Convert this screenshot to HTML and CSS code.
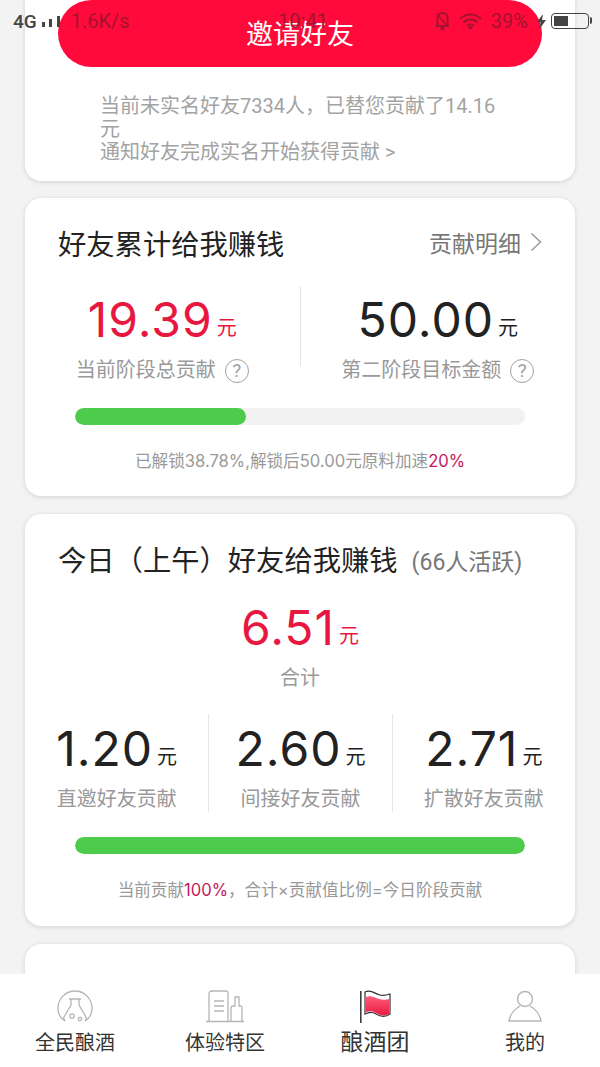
FILE: index.html
```html
<!DOCTYPE html>
<html lang="zh-CN">
<head>
    <meta charset="UTF-8">
    <meta name="viewport" content="width=device-width, initial-scale=1.0">
    <title>好友给我赚钱</title>
    <link rel="stylesheet" href="styles.css">
</head>
<body>
    <div class="status-bar">
        <div class="status-left">
            <span class="net">4G</span>
            <svg class="signal" width="19" height="14" viewBox="0 0 19 14"><rect x="0" y="8" width="3" height="5" fill="#444"/><rect x="7" y="5" width="3" height="8" fill="#444"/><rect x="15" y="2" width="3" height="11" fill="#444"/></svg>
            <span class="speed">1.6K/s</span>
        </div>
        <span class="clock">10:41</span>
        <div class="status-right">
            <svg class="bell" width="13" height="20" viewBox="0 0 13 20"><path d="M6.500 2c3 0 5 2 5 5v6l1 2H.5l1-2V7c0-3 2-5 5-5z" fill="none" stroke="#a5122f" stroke-width="2"/><path d="M1 3l11 13" stroke="#a5122f" stroke-width="1.500"/><rect x="4.500" y="16" width="4" height="3" fill="#a5122f"/></svg>
            <svg class="wifi" width="23" height="17" viewBox="0 0 23 17"><path d="M1 6c6-6 15-6 21 0M4.500 9.500c4-4 10-4 14 0M8 13c2-2 5-2 7 0" fill="none" stroke="#a5122f" stroke-width="2"/><path d="M11.500 17l-2.500-3c1.500-1 3.500-1 5 0z" fill="#a5122f"/></svg>
            <span class="percent">39%</span>
            <svg class="bolt" width="9" height="15" viewBox="0 0 9 15"><path d="M6 0L0 8h3.500L2.500 15 9 6H5z" fill="#444"/></svg>
            <div class="battery"><div class="battery-level"></div></div>
        </div>
    </div>

    <div class="main-content">
        <section class="card invite-card">
            <button class="invite-btn">邀请好友</button>
            <p class="invite-note">当前未实名好友7334人，已替您贡献了14.16元<br>通知好友完成实名开始获得贡献 &gt;</p>
        </section>

        <section class="card total-card">
            <div class="card-head">
                <h2>好友累计给我赚钱</h2>
                <a class="detail-link">贡献明细
                    <svg width="12" height="20" viewBox="0 0 12 20"><path d="M1.500 1.500L10.500 10 1.500 18.500" fill="none" stroke="#999" stroke-width="1.500"/></svg>
                </a>
            </div>
            <div class="stat-row">
                <div class="stat">
                    <div class="amount red">19.39<small>元</small></div>
                    <div class="stat-label">当前阶段总贡献<span class="help">?</span></div>
                </div>
                <div class="stat">
                    <div class="amount">50.00<small>元</small></div>
                    <div class="stat-label">第二阶段目标金额<span class="help">?</span></div>
                </div>
            </div>
            <div class="progress"><div class="progress-fill" style="width: 38%"></div></div>
            <p class="progress-note">已解锁38.78%,解锁后50.00元原料加速<em>20%</em></p>
        </section>

        <section class="card today-card">
            <div class="card-head">
                <h2>今日（上午）好友给我赚钱<span class="active-count">(66人活跃)</span></h2>
            </div>
            <div class="today-total">
                <div class="amount red">6.51<small>元</small></div>
                <div class="stat-label">合计</div>
            </div>
            <div class="split-row">
                <div class="split">
                    <div class="amount">1.20<small>元</small></div>
                    <div class="stat-label">直邀好友贡献</div>
                </div>
                <div class="split">
                    <div class="amount">2.60<small>元</small></div>
                    <div class="stat-label">间接好友贡献</div>
                </div>
                <div class="split">
                    <div class="amount">2.71<small>元</small></div>
                    <div class="stat-label">扩散好友贡献</div>
                </div>
            </div>
            <div class="progress"><div class="progress-fill" style="width: 100%"></div></div>
            <p class="progress-note">当前贡献<em>100%</em>，合计×贡献值比例=今日阶段贡献</p>
        </section>

        <section class="card empty-card"></section>
    </div>

    <nav class="tab-bar">
        <a class="tab">
            <svg width="36" height="34" viewBox="0 0 36 34" fill="none" stroke="#b5b5b5" stroke-width="1.300"><path d="M8 31C3 28 1 23 1 18 1 9 8.500 1 18 1s17 8 17 17c0 5-2 10-7 13"/><path d="M12 9h12M14 9v6L7 27c-1 2 0 3 1 4M22 9v6l7 12c1 2 0 3-1 4"/><circle cx="15" cy="26" r="2.200"/><circle cx="23" cy="29" r="1.700"/></svg>
            <span>全民酿酒</span>
        </a>
        <a class="tab">
            <svg width="38" height="34" viewBox="0 0 38 34" fill="none" stroke="#b5b5b5" stroke-width="1.300"><path d="M3 31V4q0-3 3-3h14q2 0 2 2v28M0 31.500h38"/><path d="M8 11h10M8 16h10M8 21h10"/><path d="M25 31V18q0-2 2-2h2V7h4v9h2q1 0 1 2v13"/></svg>
            <span>体验特区</span>
        </a>
        <a class="tab active">
            <svg width="31" height="34" viewBox="0 0 31 34">
                <defs><linearGradient id="flagFill" x1="0" y1="0" x2="0" y2="1"><stop offset="0" stop-color="#ff5a78"/><stop offset="1" stop-color="#ea1b45"/></linearGradient></defs>
                <path d="M.8 1v32" stroke="#333" stroke-width="1.500"/>
                <path d="M5 2c6-3 10 2 15 3 4 1 7 0 10-1v20c-4 3-9 3-14 0-3-2-7-2-11 0z" fill="#fff" stroke="#333" stroke-width="1.200"/>
                <path d="M6 7c5-2 9 1 13 2 4 1 7 1 10 0v15c-4 2-8 2-13-1-3-2-6-2-10-1z" fill="url(#flagFill)"/>
            </svg>
            <span>酿酒团</span>
        </a>
        <a class="tab">
            <svg width="34" height="34" viewBox="0 0 34 34" fill="none" stroke="#b5b5b5" stroke-width="1.400"><circle cx="17" cy="9" r="7.500"/><path d="M12 16C7 19 2 24 1 31h32C32 24 27 19 22 16"/></svg>
            <span>我的</span>
        </a>
    </nav>
</body>
</html>
```

FILE: styles.css
```css
* {
    margin: 0;
    padding: 0;
    box-sizing: border-box;
}

body {
    font-family: Roboto, 'Noto Sans CJK SC', sans-serif;
    background: #f3f3f3;
    color: #222;
    height: 1067px;
    width: 600px;
    display: flex;
    flex-direction: column;
    overflow: hidden;
    position: relative;
}

.status-bar {
    position: absolute;
    top: 10px;
    left: 13px;
    right: 9px;
    height: 22px;
    display: flex;
    align-items: center;
    justify-content: space-between;
    font-size: 20px;
    color: #a5122f;
    z-index: 2;
}

.status-left,
.status-right {
    display: flex;
    align-items: center;
    width: 170px;
}

.status-right {
    justify-content: flex-end;
}

.net {
    color: #444;
    font-size: 19px;
    font-weight: 500;
}

.signal {
    margin-left: 5px;
}

.speed {
    margin-left: 10px;
}

.clock {
    margin-left: 2px;
}

.wifi {
    margin-left: 10px;
}

.percent {
    margin-left: 9px;
}

.bolt {
    margin-left: 9px;
}

.battery {
    position: relative;
    width: 38px;
    height: 16px;
    border: 1.500px solid #444;
    border-radius: 4px;
    padding: 2px;
    margin-left: 5px;
    margin-right: 2px;
}

.battery::after {
    content: "";
    position: absolute;
    right: -4px;
    top: 3px;
    width: 2px;
    height: 7px;
    background: #444;
    border-radius: 0 2px 2px 0;
}

.battery-level {
    width: 14px;
    height: 100%;
    background: #444;
}

.main-content {
    flex: 1;
    min-height: 0;
    overflow: hidden;
    padding: 0 25px;
    display: flex;
    flex-direction: column;
    gap: 17px;
}

.card {
    flex: none;
    background: #fff;
    border-radius: 16px;
    box-shadow: 0 1px 5px rgba(0, 0, 0, 0.14);
}

.invite-card {
    margin-top: -20px;
    padding: 20px 33px 17px;
}

.invite-btn {
    display: block;
    width: 100%;
    height: 67px;
    padding-bottom: 2px;
    border: none;
    border-radius: 34px;
    background: #ff0a3a;
    color: #fff;
    font-family: inherit;
    font-size: 27px;
}

.invite-note {
    margin: 28px 0 0 42px;
    width: 400px;
    font-size: 20px;
    line-height: 23px;
    color: #a3a3a3;
}

.total-card {
    height: 298px;
    padding: 27px 33px 0;
}

.today-card {
    height: 412px;
    margin-top: 1px;
    padding: 27px 33px 0;
}

.empty-card {
    height: 100px;
    margin-top: 1px;
}

.card-head {
    display: flex;
    align-items: center;
    justify-content: space-between;
    height: 34px;
}

.card-head h2 {
    font-size: 28.3px;
    font-weight: 400;
    color: #222;
}

.active-count {
    font-size: 23px;
    color: #777;
    margin-left: 14px;
    vertical-align: 1px;
}

.detail-link {
    display: flex;
    align-items: center;
    gap: 9px;
    font-size: 23px;
    color: #777;
}

.stat-row {
    display: flex;
    margin: 27px -33px 0;
    height: 80px;
}

.stat {
    flex: 1;
    text-align: center;
}

.stat + .stat {
    border-left: 1px solid #e6e6e6;
}

.amount {
    font-family: Inter, 'Noto Sans CJK SC', sans-serif;
    font-size: 48px;
    line-height: 68px;
    letter-spacing: 1px;
    color: #222;
}

.amount small {
    font-family: 'Noto Sans CJK SC', sans-serif;
    font-size: 20px;
    line-height: 1;
    letter-spacing: 0;
    margin-left: 4px;
    vertical-align: 2px;
}

.amount.red {
    color: #e8173f;
}

.stat-label {
    margin-top: 2px;
    font-size: 20px;
    line-height: 28px;
    color: #999;
}

.help {
    display: inline-block;
    width: 24px;
    height: 24px;
    margin-left: 9px;
    border: 1.500px solid #a0a0a0;
    border-radius: 50%;
    font-size: 19px;
    line-height: 21px;
    text-align: center;
    color: #a0a0a0;
}

.progress {
    height: 17px;
    margin: 42px 17px 0;
    background: #f2f2f2;
    border-radius: 9px;
    overflow: hidden;
}

.today-card .progress {
    margin-top: 25px;
}

.progress-fill {
    height: 100%;
    background: #4ccb4c;
    border-radius: 9px;
}

.progress-note {
    margin-top: 25px;
    text-align: center;
    font-family: Inter, 'Noto Sans CJK SC', sans-serif;
    font-size: 16.6px;
    line-height: 22px;
    color: #999;
}

.progress-note em {
    font-style: normal;
    color: #c2185b;
}

.today-total {
    text-align: center;
    margin-top: 19px;
}

.split-row {
    display: grid;
    grid-template-columns: 1fr 1fr 1fr;
    margin: 22px -33px 0;
}

.split {
    text-align: center;
    height: 98px;
    padding-top: 1px;
}

.split + .split {
    border-left: 1px solid #e6e6e6;
}

.tab-bar {
    flex: none;
    height: 93px;
    background: #fff;
    display: grid;
    grid-template-columns: repeat(4, 1fr);
    position: relative;
}

.tab {
    display: flex;
    flex-direction: column;
    align-items: center;
    padding-top: 16px;
    font-size: 20px;
    line-height: 28px;
    color: #333;
}

.tab span {
    margin-top: 5px;
}

.tab.active span {
    font-size: 23px;
}
```
